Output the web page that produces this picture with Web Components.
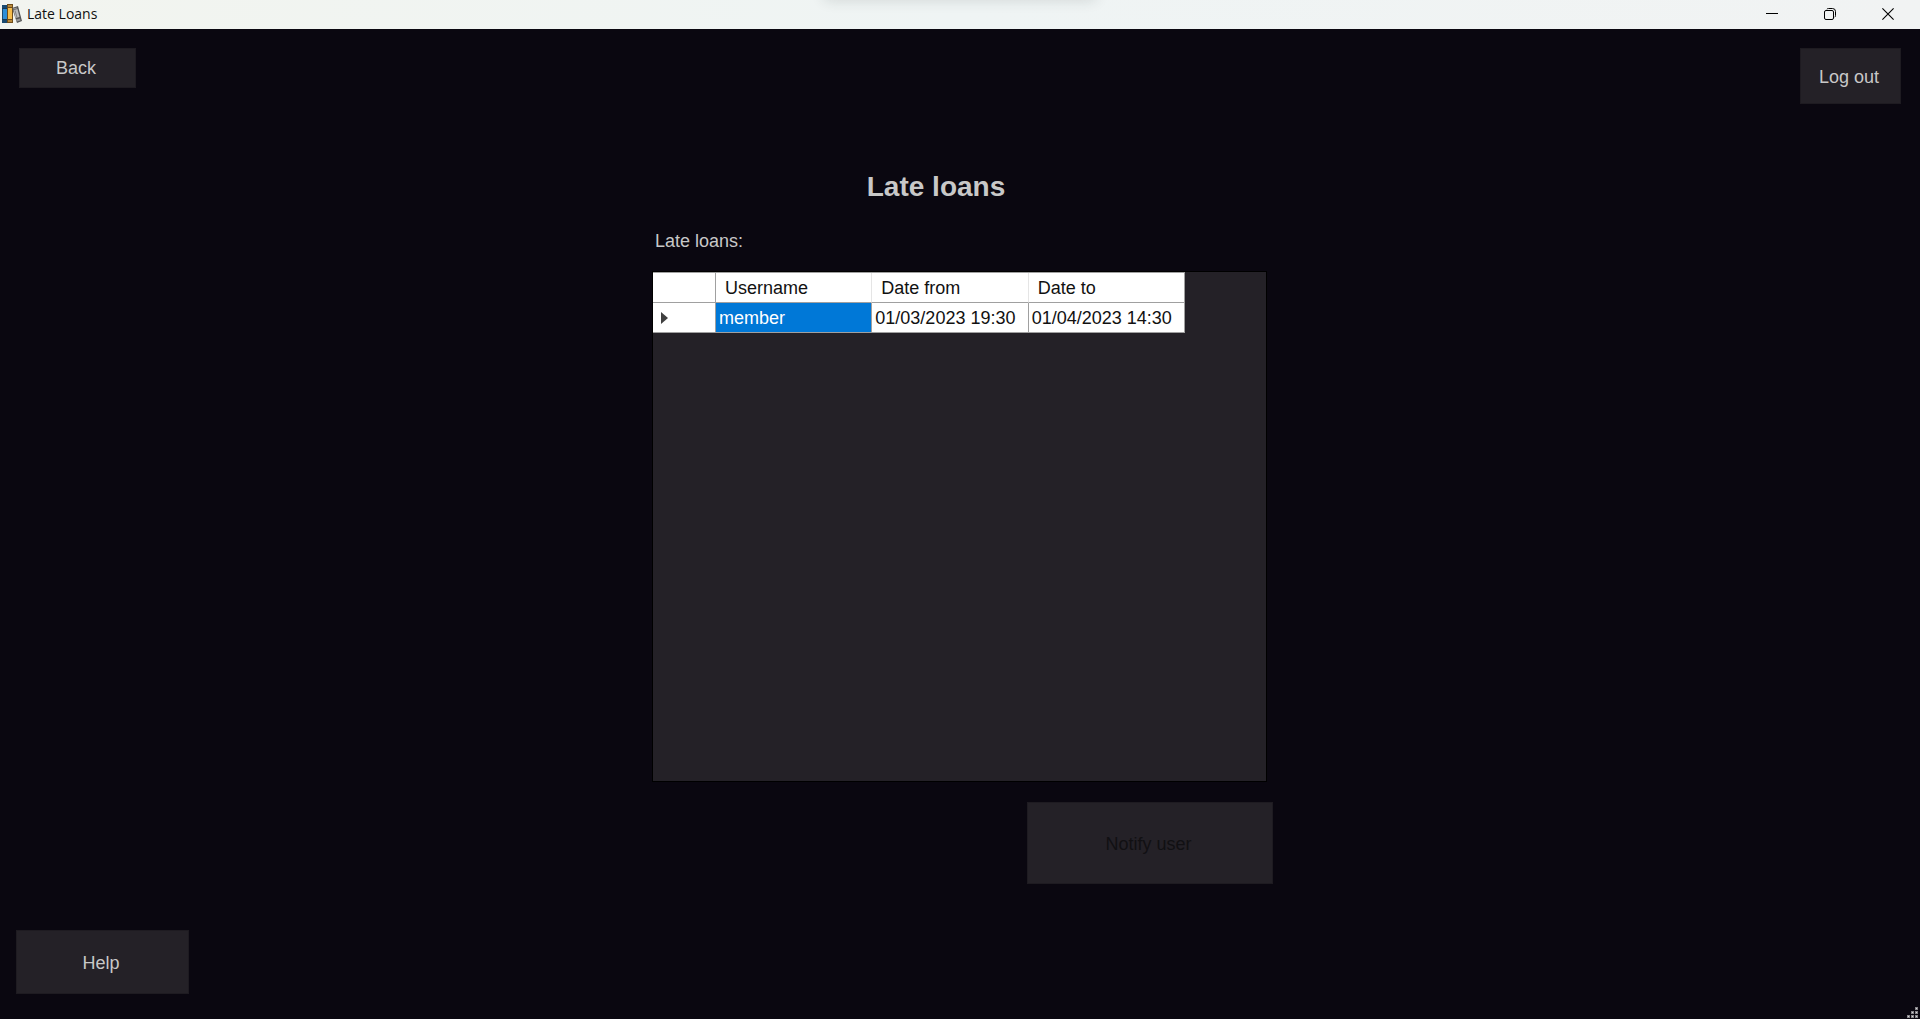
<!DOCTYPE html>
<html lang="en">
<head>
<meta charset="utf-8">
<title>Late Loans</title>
<style>
html, body { margin: 0; }
body { background: #0a0710; color: #c8c8c8; font: 18px/20px "Liberation Sans", Arial, sans-serif; }
</style>
</head>
<body>
<late-loans-app></late-loans-app>

<template id="title-bar">
<style>
:host { display: flex; align-items: stretch; box-sizing: border-box; height: 29px; padding-bottom: 1px; background: linear-gradient(90deg, #f2f4ef, #eff4f4 50%, #f1f3f3); color: #111; position: relative; overflow: hidden; flex: none; }
:host::before { content: ""; position: absolute; left: 50%; top: -10px; width: 270px; height: 8px; margin-left: -135px; border-radius: 8px; box-shadow: 0 0 14px 2px rgba(40,50,50,.16); }
.name { display: flex; align-items: center; gap: 5px; padding-left: 2px; flex: 1; font: 14px/20px "Open Sans", "Noto Sans", sans-serif; }
.controls { display: flex; padding-right: 3px; }
button { width: 58px; padding: 0; border: 0; background: none; color: inherit; display: flex; align-items: center; justify-content: center; }
button:hover { background: #dfe3e3; }
svg { display: block; }
</style>
<div class="name">
<svg width="20" height="20" viewBox="0 0 20 20" aria-hidden="true">
<path d="M0 1h5v18H0z" fill="#1b4a70"/><path d="M1 5h4v10H1z" fill="#2d8fd8"/><path d="M0 4h5v1H0zM0 15h5v1H0z" fill="#173b58"/>
<path d="M5 0h6v19H5z" fill="#6f4d1b"/><path d="M6 4h4v11H6z" fill="#f5bd4d"/><path d="M6 1h4v2H6zM6 16h4v2H6z" fill="#b9893a"/>
<path d="M10 4l6-2 4 15-5 2z" fill="#555"/><path d="M11.500 6l4-1 2 8-4 1z" fill="#bdbdbd"/><path d="M11 4.500l4-1 .3 1-4 1zM14 15.500l4-1 .5 2-3.800 1z" fill="#999"/><path d="M13 6.500l2 7" stroke="#858585" stroke-width="1"/>
</svg>
<span><slot></slot></span>
</div>
<div class="controls">
<button aria-label="Minimise"><svg width="12" height="12" viewBox="0 0 12 12"><path d="M0 5.500h12" stroke="#000"/></svg></button>
<button aria-label="Restore"><svg width="12" height="12" viewBox="0 0 12 12" fill="none" stroke="#000"><rect x=".5" y="2.500" width="9" height="9" rx="1.500"/><path d="M2.800 1.300Q3.300.5 4.500.5H8.500q3 0 3 3V7.500q0 1.200-.8 1.700"/></svg></button>
<button aria-label="Close"><svg width="12" height="12" viewBox="0 0 12 12"><path d="M.4.4l11.200 11.200M11.600.4L.4 11.600" stroke="#000" stroke-width="1.100"/></svg></button>
</div>
</template>

<template id="form-button">
<style>
:host { display: block; }
button { display: block; width: 100%; margin: 0; padding: var(--pad, 9px 3px 9px 0); border: 1px solid #1e1b21; background: #242127; color: #c8c8c8; font: inherit; text-align: center; }
button:disabled { color: #111013; }
</style>
<button><slot></slot></button>
</template>

<template id="loans-grid">
<style>
:host { display: block; background: #242127; border: 1px solid #000; box-sizing: border-box; overflow: auto; }
table { border-collapse: separate; border-spacing: 0; table-layout: fixed; width: 532px; background: #fff; color: #111; border-top: 1px solid #a0a0a0; }
.marker { width: 63px; }
th, td { box-sizing: border-box; height: 30px; padding: 0 3px; border-right: 1px solid #a0a0a0; border-bottom: 1px solid #a0a0a0; font-weight: normal; text-align: left; white-space: nowrap; }
thead th { padding-left: 9px; border-right-color: #e5e5e5; }
thead td, tbody th, thead th:last-child { border-right-color: #a0a0a0; }
tbody th { padding-left: 8px; }
td.selected { background: #0078d7; color: #fff; }
svg { display: block; }
</style>
<table>
<colgroup><col class="marker"><col><col><col></colgroup>
<thead><tr><td></td><th scope="col">Username</th><th scope="col">Date from</th><th scope="col">Date to</th></tr></thead>
<tbody><tr><th scope="row" aria-label="Current row"><svg width="7" height="12" viewBox="0 0 7 12"><path d="M0 0l7 6-7 6z" fill="#404040"/></svg></th><td class="selected">member</td><td>01/03/2023 19:30</td><td>01/04/2023 14:30</td></tr></tbody>
</table>
</template>

<template id="size-grip">
<style>
:host { display: block; }
svg { display: block; }
</style>
<svg width="11" height="11" viewBox="0 0 11 11" aria-hidden="true"><path fill="#858388" d="M8 0h3v3H8zM4 4h3v3H4zM8 4h3v3H8zM0 8h3v3H0zM4 8h3v3H4zM8 8h3v3H8z"/><path fill="#d8d8d8" d="M9 1h1v1H9zM5 5h1v1H5zM9 5h1v1H9zM1 9h1v1H1zM5 9h1v1H5zM9 9h1v1H9z"/></svg>
</template>

<template id="late-loans-app">
<style>
:host { display: flex; flex-direction: column; min-height: 100vh; position: relative; }
header { display: flex; justify-content: space-between; align-items: flex-start; padding: 19px 19px 0; }
.back { width: 117px; }
.logout { width: 101px; --pad: 18px 3px 16px 0; }
main { display: flex; flex-direction: column; flex: 1; box-sizing: border-box; width: 100%; max-width: 626px; margin: 0 auto; padding-top: 67px; }
h1 { margin: 0 54px 28px 6px; font-size: 28px; line-height: 32px; text-align: center; }
.caption { margin: 0 8px 20px; }
loans-grid { flex: 1; min-height: 120px; margin: 0 6px 20px 5px; }
.notify { width: 246px; align-self: flex-end; --pad: 31px 3px 29px 0; }
footer { padding: 46px 16px 25px; }
.help { width: 173px; --pad: 22px 3px 20px 0; }
size-grip { position: absolute; right: 2px; bottom: 1px; }
</style>
<title-bar>Late Loans</title-bar>
<header>
<form-button class="back">Back</form-button>
<form-button class="logout">Log out</form-button>
</header>
<main>
<h1>Late loans</h1>
<div class="caption">Late loans:</div>
<loans-grid></loans-grid>
<form-button class="notify" disabled>Notify user</form-button>
</main>
<footer><form-button class="help">Help</form-button></footer>
<size-grip></size-grip>
</template>

<script>
class TemplateElement extends HTMLElement {
  constructor() {
    super();
    this.attachShadow({ mode: "open" })
      .append(document.getElementById(this.localName).content.cloneNode(true));
  }
}
customElements.define("title-bar", class TitleBar extends TemplateElement {});
customElements.define("form-button", class FormButton extends TemplateElement {
  connectedCallback() {
    this.shadowRoot.querySelector("button").disabled = this.hasAttribute("disabled");
  }
});
customElements.define("loans-grid", class LoansGrid extends TemplateElement {});
customElements.define("size-grip", class SizeGrip extends TemplateElement {});

class LateLoansApp extends HTMLElement {
  connectedCallback() {
    if (this.shadowRoot) return;
    this.attachShadow({ mode: "open" })
      .append(document.importNode(document.getElementById("late-loans-app").content, true));
  }
}
customElements.define("late-loans-app", LateLoansApp);
</script>
</body>
</html>
